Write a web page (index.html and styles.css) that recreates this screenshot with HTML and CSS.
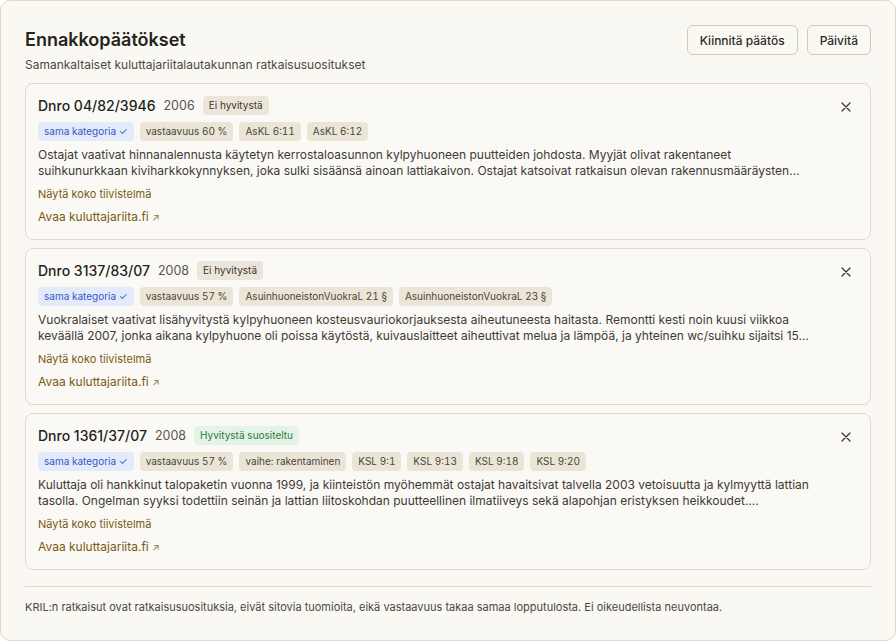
FILE: index.html
```html
<!DOCTYPE html>
<html lang="fi">
<head>
<meta charset="utf-8">
<title>Ennakkopäätökset</title>
<link rel="stylesheet" href="styles.css">
</head>
<body>
<div class="panel">
  <header class="head">
    <div class="head-text">
      <h1 class="title">Ennakkopäätökset</h1>
      <p class="subtitle">Samankaltaiset kuluttajariitalautakunnan ratkaisusuositukset</p>
    </div>
    <div class="actions">
      <button class="btn">Kiinnitä päätös</button>
      <button class="btn">Päivitä</button>
    </div>
  </header>

  <div class="cards">
    <article class="card">
      <div class="card-body">
        <div class="card-title">
          <span class="dnro">Dnro 04/82/3946</span>
          <span class="year">2006</span>
          <span class="badge">Ei hyvitystä</span>
        </div>
        <div class="tags">
          <span class="tag tag-blue">sama kategoria ✓</span>
          <span class="tag">vastaavuus 60 %</span>
          <span class="tag">AsKL 6:11</span>
          <span class="tag">AsKL 6:12</span>
        </div>
        <p class="desc">Ostajat vaativat hinnanalennusta käytetyn kerrostaloasunnon kylpyhuoneen puutteiden johdosta. Myyjät olivat rakentaneet suihkunurkkaan kiviharkkokynnyksen, joka sulki sisäänsä ainoan lattiakaivon. Ostajat katsoivat ratkaisun olevan rakennusmääräysten…</p>
        <a class="more">Näytä koko tiivistelmä</a>
        <a class="open">Avaa kuluttajariita.fi <span class="arrow">↗</span></a>
      </div>
      <button class="close" aria-label="Sulje"><svg width="10" height="10" viewBox="0 0 10 10"><path d="M1 1L9 9M9 1L1 9" stroke="#3a362f" stroke-width="1.2" stroke-linecap="round"/></svg></button>
    </article>

    <article class="card">
      <div class="card-body">
        <div class="card-title">
          <span class="dnro">Dnro 3137/83/07</span>
          <span class="year">2008</span>
          <span class="badge">Ei hyvitystä</span>
        </div>
        <div class="tags">
          <span class="tag tag-blue">sama kategoria ✓</span>
          <span class="tag">vastaavuus 57 %</span>
          <span class="tag">AsuinhuoneistonVuokraL 21 §</span>
          <span class="tag">AsuinhuoneistonVuokraL 23 §</span>
        </div>
        <p class="desc">Vuokralaiset vaativat lisähyvitystä kylpyhuoneen kosteusvauriokorjauksesta aiheutuneesta haitasta. Remontti kesti noin kuusi viikkoa keväällä 2007, jonka aikana kylpyhuone oli poissa käytöstä, kuivauslaitteet aiheuttivat melua ja lämpöä, ja yhteinen wc/suihku sijaitsi 15…</p>
        <a class="more">Näytä koko tiivistelmä</a>
        <a class="open">Avaa kuluttajariita.fi <span class="arrow">↗</span></a>
      </div>
      <button class="close" aria-label="Sulje"><svg width="10" height="10" viewBox="0 0 10 10"><path d="M1 1L9 9M9 1L1 9" stroke="#3a362f" stroke-width="1.2" stroke-linecap="round"/></svg></button>
    </article>

    <article class="card">
      <div class="card-body">
        <div class="card-title">
          <span class="dnro">Dnro 1361/37/07</span>
          <span class="year">2008</span>
          <span class="badge badge-green">Hyvitystä suositeltu</span>
        </div>
        <div class="tags">
          <span class="tag tag-blue">sama kategoria ✓</span>
          <span class="tag">vastaavuus 57 %</span>
          <span class="tag">vaihe: rakentaminen</span>
          <span class="tag">KSL 9:1</span>
          <span class="tag">KSL 9:13</span>
          <span class="tag">KSL 9:18</span>
          <span class="tag">KSL 9:20</span>
        </div>
        <p class="desc">Kuluttaja oli hankkinut talopaketin vuonna 1999, ja kiinteistön myöhemmät ostajat havaitsivat talvella 2003 vetoisuutta ja kylmyyttä lattian tasolla. Ongelman syyksi todettiin seinän ja lattian liitoskohdan puutteellinen ilmatiiveys sekä alapohjan eristyksen heikkoudet....</p>
        <a class="more">Näytä koko tiivistelmä</a>
        <a class="open">Avaa kuluttajariita.fi <span class="arrow">↗</span></a>
      </div>
      <button class="close" aria-label="Sulje"><svg width="10" height="10" viewBox="0 0 10 10"><path d="M1 1L9 9M9 1L1 9" stroke="#3a362f" stroke-width="1.2" stroke-linecap="round"/></svg></button>
    </article>
  </div>

  <footer class="foot">
    <p>KRIL:n ratkaisut ovat ratkaisusuosituksia, eivät sitovia tuomioita, eikä vastaavuus takaa samaa lopputulosta. Ei oikeudellista neuvontaa.</p>
  </footer>
</div>
</body>
</html>
```

FILE: styles.css
```css
* { box-sizing: border-box; }
html, body { margin: 0; padding: 0; }
body {
  font-family: Inter, "Noto Sans", sans-serif;
  color: #27231d;
  background: #ffffff;
  width: 896px;
  height: 641px;
}
.panel {
  width: 896px;
  height: 641px;
  background: #faf8f3;
  border: 1px solid #e2d9c3;
  border-radius: 10px;
  padding: 24px 24px 0 24px;
}
.head {
  display: flex;
  justify-content: space-between;
  align-items: flex-start;
}
.title {
  margin: 3px 0 0 0;
  font-size: 18px;
  font-weight: 600;
  line-height: 24px;
}
.subtitle {
  margin: 5px 0 0 0;
  font-size: 12px;
  line-height: 16px;
  color: #4d4840;
}
.actions {
  display: flex;
  gap: 9px;
}
.btn {
  font-family: inherit;
  font-size: 12px;
  font-weight: 500;
  color: #2f2b25;
  background: #faf8f3;
  border: 1px solid #d3c9b2;
  border-radius: 6px;
  height: 30px;
  padding: 0 12px;
}
.cards {
  margin-top: 10px;
  display: flex;
  flex-direction: column;
  gap: 8px;
}
.card {
  display: flex;
  gap: 10px;
  background: #faf9f5;
  border: 1px solid #e3dbc8;
  border-radius: 8px;
  padding: 11px 12px 13px 12px;
  height: 157px;
}
.card-body {
  flex: 1;
  min-width: 0;
  display: flex;
  flex-direction: column;
  align-items: flex-start;
}
.card-title {
  display: flex;
  align-items: center;
  gap: 8px;
  height: 20px;
}
.dnro {
  font-size: 14px;
  font-weight: 500;
  color: #221f1a;
}
.year {
  font-size: 12.5px;
  color: #5a554c;
}
.badge {
  font-size: 10px;
  line-height: 19px;
  padding: 0 6px;
  background: #ece6da;
  color: #3a352d;
  border-radius: 4px;
}
.badge-green {
  background: #e3f3e6;
  color: #2c7a40;
}
.tags {
  display: flex;
  flex-wrap: wrap;
  gap: 6px;
  margin-top: 7px;
}
.tag {
  font-size: 10px;
  line-height: 19px;
  padding: 0 6px;
  background: #ebe5d8;
  color: #4a453c;
  border-radius: 4px;
  font-variant-numeric: tabular-nums;
}
.tag-blue {
  background: #e3ebfb;
  color: #3857c9;
}
.desc {
  margin: 6px 0 0 0;
  font-size: 12px;
  line-height: 16px;
  color: #3f3a33;
  display: -webkit-box;
  -webkit-line-clamp: 2;
  -webkit-box-orient: vertical;
  overflow: hidden;
}
.more {
  margin-top: 7px;
  font-size: 11px;
  line-height: 16px;
  color: #7a5a12;
}
.open {
  margin-top: 7px;
  font-size: 12px;
  line-height: 16px;
  color: #7a5a12;
}
.arrow {
  font-size: 10px;
  color: #8f7a4a;
}
.close {
  flex: none;
  width: 24px;
  height: 24px;
  border: none;
  background: transparent;
  padding: 0;
  display: flex;
  align-items: center;
  justify-content: center;
}
.foot {
  margin-top: 16px;
  border-top: 1px solid #e0d8c4;
  padding-top: 13px;
}
.foot p {
  margin: 0;
  font-size: 11px;
  line-height: 14px;
  color: #4d4840;
}
```
